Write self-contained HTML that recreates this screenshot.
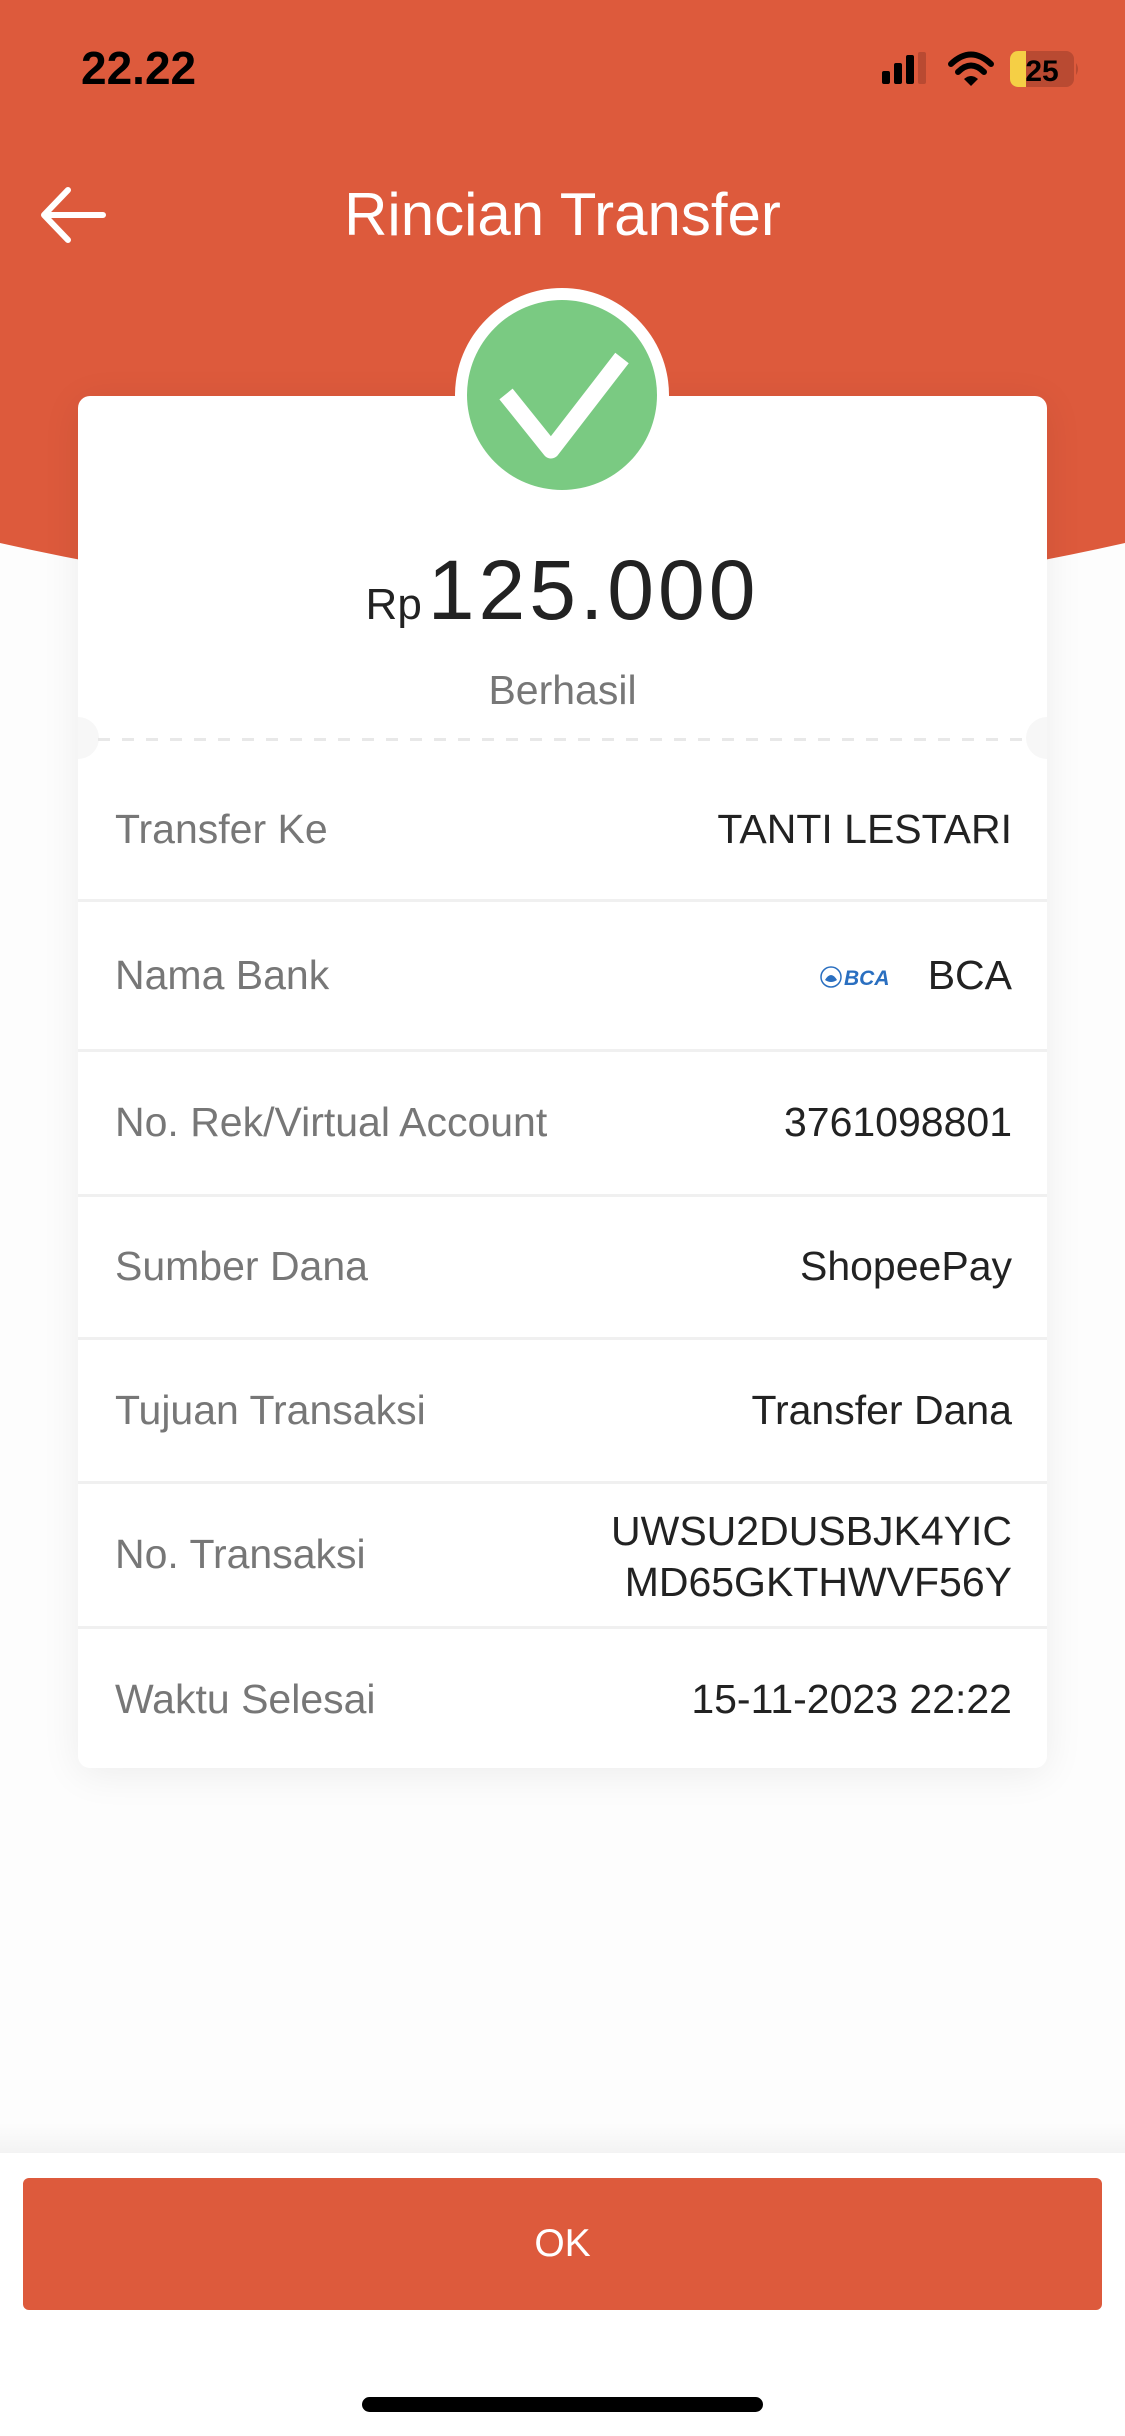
<!DOCTYPE html>
<html><head><meta charset="utf-8">
<style>
*{margin:0;padding:0;box-sizing:border-box}
body{width:1125px;height:2436px;position:relative;overflow:hidden;background:#fdfdfd;font-family:"Liberation Sans",Arial,sans-serif}
.abs{position:absolute}
.lbl{position:absolute;left:115px;font-size:41px;line-height:50px;color:#777;white-space:nowrap}
.val{position:absolute;right:113px;font-size:41px;line-height:50px;color:#222;text-align:right;white-space:nowrap}
.sep{position:absolute;left:78px;width:969px;height:3px;background:#f0f0f0}
</style></head><body>
<svg class="abs" style="left:0;top:0" width="1125" height="700"><path d="M0 0H1125V543Q562 670 0 543Z" fill="#dd5a3c"/></svg>
<div class="abs" style="left:81px;top:41px;font-size:46px;font-weight:bold;color:#000;line-height:54px">22.22</div>
<svg class="abs" style="left:880px;top:48px" width="200" height="45">
<rect x="2" y="23" width="8" height="13" rx="2" fill="#000"/>
<rect x="14" y="15" width="8" height="21" rx="2" fill="#000"/>
<rect x="26" y="7" width="8" height="29" rx="2" fill="#000"/>
<rect x="38" y="4" width="8" height="32" rx="2" fill="#b94a32"/>
<path d="M71 16Q91 -3 111 16" stroke="#000" stroke-width="6" fill="none" stroke-linecap="round"/>
<path d="M78 24Q91 11 104 24" stroke="#000" stroke-width="6" fill="none" stroke-linecap="round"/>
<path d="M84 31L91 38L98 31Q91 25 84 31Z" fill="#000"/>
<rect x="130" y="3" width="64" height="36" rx="8" fill="#b94a32"/>
<path d="M138 3H146V39H138A8 8 0 0 1 130 31V11A8 8 0 0 1 138 3Z" fill="#f5cf45"/>
<path d="M196 15V27Q200 21 196 15Z" fill="#b94a32"/>
<text x="162" y="33" font-family="Liberation Sans" font-weight="bold" font-size="30" text-anchor="middle" fill="#000">25</text>
</svg>
<svg class="abs" style="left:0;top:170px" width="120" height="90"><path d="M103 45H45M68 20L44 45L68 70" stroke="#fff" stroke-width="6" fill="none" stroke-linecap="round" stroke-linejoin="round"/></svg>
<div class="abs" style="left:0;width:1125px;top:180px;text-align:center;color:#fff;font-size:60px;line-height:70px">Rincian Transfer</div>
<div class="abs" style="left:78px;top:396px;width:969px;height:1372px;background:#fff;border-radius:12px;box-shadow:0 6px 40px rgba(0,0,0,0.07)"></div>
<div class="abs" style="left:57px;top:717px;width:42px;height:42px;border-radius:50%;background:#f7f7f7;clip-path:inset(0 0 0 21px)"></div>
<div class="abs" style="left:1026px;top:717px;width:42px;height:42px;border-radius:50%;background:#f7f7f7;clip-path:inset(0 21px 0 0)"></div>
<div class="abs" style="left:98px;top:738px;width:929px;height:3px;background:repeating-linear-gradient(90deg,#e8e8e8 0 12px,transparent 12px 24px)"></div>
<div class="abs" style="left:455px;top:288px;width:214px;height:214px;border-radius:50%;background:#fff"></div>
<div class="abs" style="left:467px;top:300px;width:190px;height:190px;border-radius:50%;background:#7aca82"></div>
<svg class="abs" style="left:467px;top:300px" width="190" height="190"><path d="M39 94L84 150L155 58" stroke="#fff" stroke-width="17" fill="none" stroke-linejoin="round"/></svg>
<div class="abs" style="left:0;width:1125px;top:545px;text-align:center;color:#222;white-space:nowrap"><span style="font-size:44px;margin-right:6px">Rp</span><span style="font-size:84px;letter-spacing:4px;line-height:90px">125.000</span></div>
<div class="abs" style="left:0;width:1125px;top:665px;text-align:center;color:#777;font-size:41px;line-height:50px">Berhasil</div>

<div class="lbl" style="top:804px">Transfer Ke</div><div class="val" style="top:804px">TANTI LESTARI</div>
<div class="sep" style="top:899px"></div>
<div class="lbl" style="top:950px">Nama Bank</div><div class="val" style="top:950px">BCA</div>
<svg class="abs" style="left:820px;top:964px" width="72" height="28">
<circle cx="11" cy="13" r="10" fill="none" stroke="#2a6fc0" stroke-width="1.5"/>
<path d="M5 16Q11 6 17 16Q11 20 5 16Z" fill="#2a6fc0"/>
<text x="24" y="21" font-family="Liberation Sans" font-weight="bold" font-style="italic" font-size="21" fill="#2a6fc0">BCA</text>
</svg>
<div class="sep" style="top:1049px"></div>
<div class="lbl" style="top:1097px">No. Rek/Virtual Account</div><div class="val" style="top:1097px">3761098801</div>
<div class="sep" style="top:1194px"></div>
<div class="lbl" style="top:1241px">Sumber Dana</div><div class="val" style="top:1241px">ShopeePay</div>
<div class="sep" style="top:1337px"></div>
<div class="lbl" style="top:1385px">Tujuan Transaksi</div><div class="val" style="top:1385px">Transfer Dana</div>
<div class="sep" style="top:1481px"></div>
<div class="lbl" style="top:1529px">No. Transaksi</div><div class="val" style="top:1506px;line-height:51px">UWSU2DUSBJK4YIC<br>MD65GKTHWVF56Y</div>
<div class="sep" style="top:1626px"></div>
<div class="lbl" style="top:1674px">Waktu Selesai</div><div class="val" style="top:1674px">15-11-2023 22:22</div>

<div class="abs" style="left:0;top:2123px;width:1125px;height:30px;background:linear-gradient(#fdfdfd,#f3f3f3)"></div>
<div class="abs" style="left:0;top:2153px;width:1125px;height:283px;background:#fff"></div>
<div class="abs" style="left:23px;top:2178px;width:1079px;height:132px;background:#dd5a3c;border-radius:6px;color:#fff;font-size:39px;line-height:132px;text-align:center">OK</div>
<div class="abs" style="left:362px;top:2397px;width:401px;height:15px;background:#000;border-radius:8px"></div>
</body></html>
